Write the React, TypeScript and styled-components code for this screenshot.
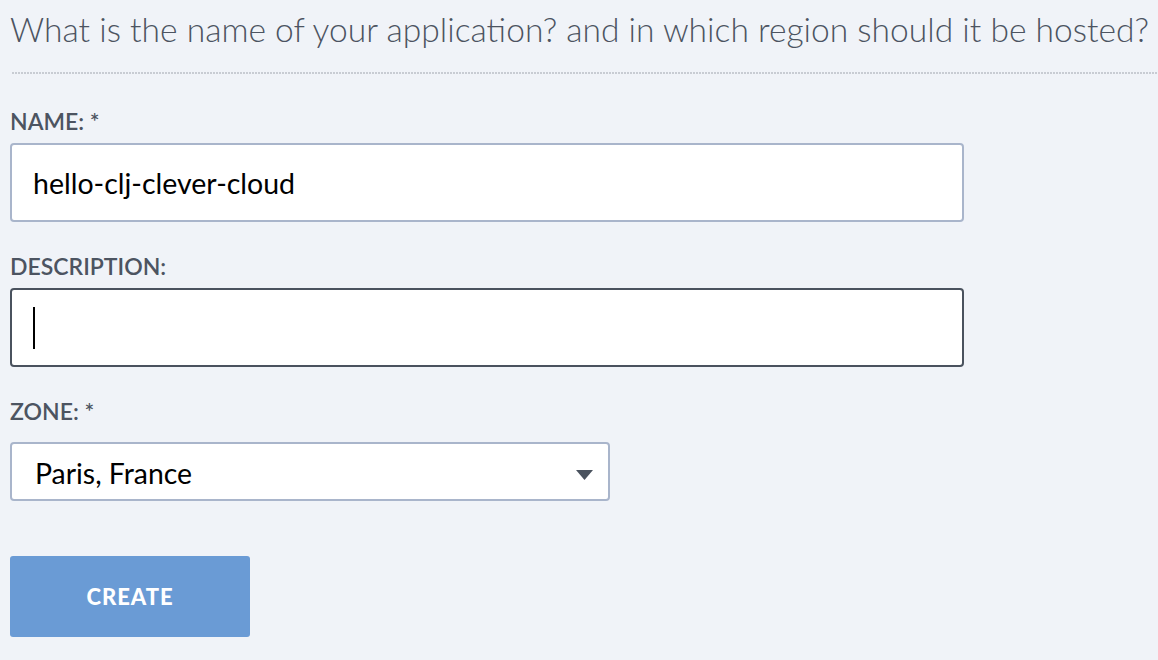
import styled, { createGlobalStyle } from "styled-components";

const GlobalStyle = createGlobalStyle`
  html, body {
    margin: 0;
    padding: 0;
    background: #f0f3f8;
    font-family: Lato, "Noto Sans", sans-serif;
  }
`;

const Page = styled.main`
  min-height: 660px;
  padding-left: 10px;
  box-sizing: border-box;
  overflow: hidden;
`;

const Title = styled.h1`
  margin: 9px 0 0;
  font-size: 33.6px;
  line-height: 40px;
  font-weight: 300;
  color: #4c5461;
  white-space: nowrap;
`;

const Rule = styled.div`
  margin-top: 23px;
  height: 2px;
  margin-left: 2px;
  background-image: repeating-linear-gradient(
    to right,
    #c8ccd3 0 2px,
    transparent 2px 3px
  );
`;

const Form = styled.form`
  display: flex;
  flex-direction: column;
  padding-top: 35px;
`;

const Group = styled.div<{ $gap?: number }>`
  display: flex;
  flex-direction: column;
  gap: ${(p) => p.$gap ?? 10}px;
  & + & {
    margin-top: 32px;
  }
`;

const Label = styled.label`
  font-size: 23px;
  line-height: 24px;
  font-weight: 600;
  color: #4c5461;
`;

const Field = styled.div<{ $focused?: boolean }>`
  width: 954px;
  height: 79px;
  box-sizing: border-box;
  display: flex;
  align-items: center;
  padding-left: 21px;
  background: #fff;
  border: 2px solid ${(p) => (p.$focused ? "#4a525e" : "#a9b5cb")};
  border-radius: 4px;
  font-size: 28.5px;
  color: #000;
`;

const Caret = styled.span`
  display: block;
  width: 2px;
  height: 42px;
  background: #000;
`;

const Select = styled.div`
  width: 600px;
  height: 59px;
  box-sizing: border-box;
  display: flex;
  align-items: center;
  justify-content: space-between;
  padding: 2px 15px 0 23px;
  background: #fff;
  border: 2px solid #a9b5cb;
  border-radius: 4px;
  font-size: 28.4px;
  color: #000;

  svg {
    margin-top: 4px;
  }
`;

const Button = styled.button`
  margin-top: 55px;
  width: 240px;
  height: 81px;
  border: none;
  border-radius: 3px;
  background: #6a9bd5;
  color: #fff;
  font-family: Lato, "Noto Sans", sans-serif;
  font-size: 22px;
  font-weight: 900;
  letter-spacing: 1px;
  cursor: pointer;
`;

const Triangle = () => (
  <svg width="17" height="10" viewBox="0 0 17 10">
    <path d="M0 0 H17 L8.5 10 Z" fill="#4a525e" />
  </svg>
);

export default function App() {
  return (
    <Page>
      <GlobalStyle />
      <Title>
        What is the name of your application? and in which region should it be
        hosted?
      </Title>
      <Rule />
      <Form onSubmit={(e) => e.preventDefault()}>
        <Group>
          <Label>NAME: *</Label>
          <Field>hello-clj-clever-cloud</Field>
        </Group>
        <Group>
          <Label>DESCRIPTION:</Label>
          <Field $focused>
            <Caret />
          </Field>
        </Group>
        <Group $gap={19}>
          <Label>ZONE: *</Label>
          <Select>
            Paris, France
            <Triangle />
          </Select>
        </Group>
        <Button type="submit">CREATE</Button>
      </Form>
    </Page>
  );
}
